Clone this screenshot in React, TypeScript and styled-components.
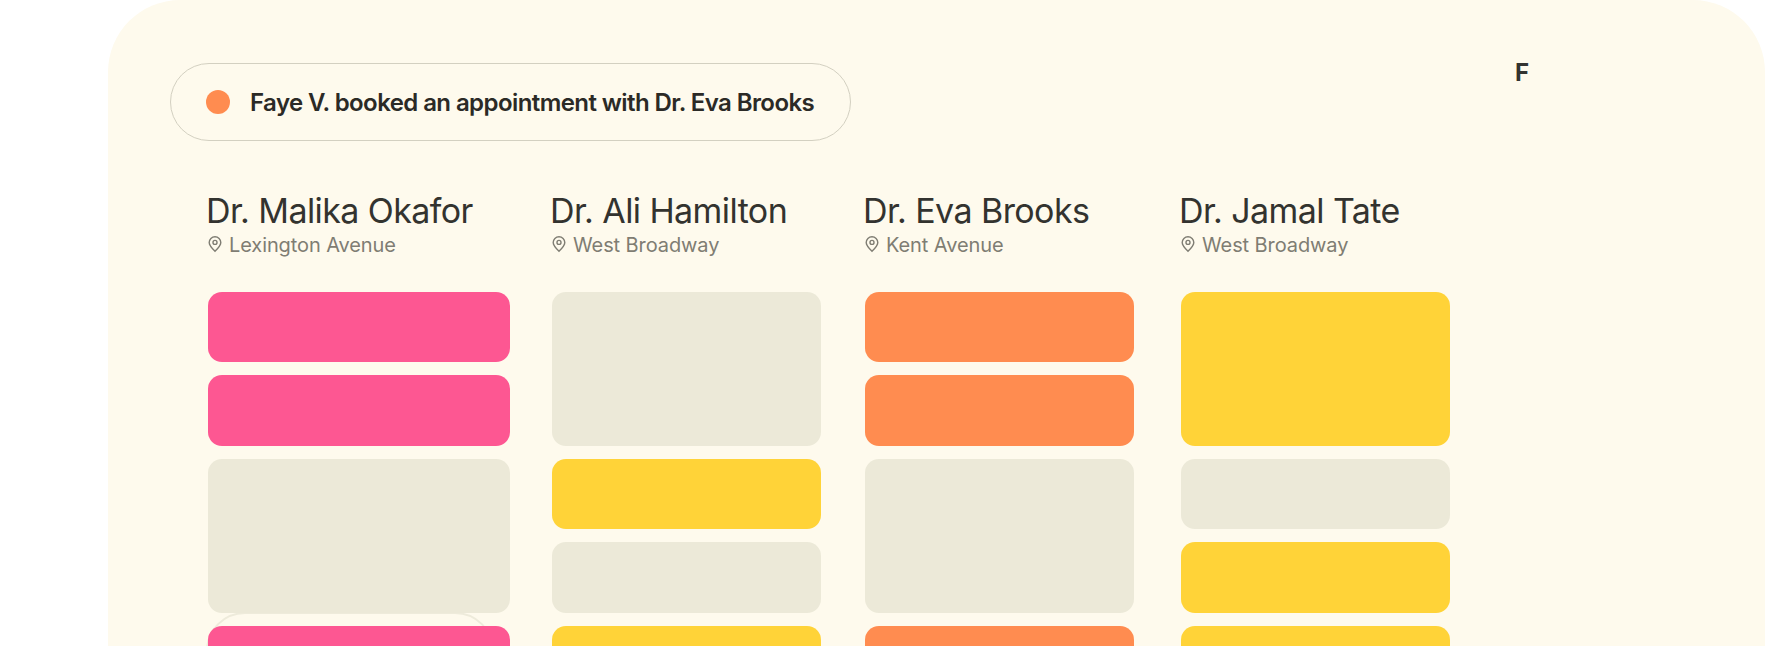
import styled, { createGlobalStyle } from "styled-components";

const GlobalStyle = createGlobalStyle`
  html, body {
    margin: 0;
    padding: 0;
    background: #fff;
  }
  body {
    font-family: Inter, "Liberation Sans", sans-serif;
    overflow: hidden;
  }
`;

const Page = styled.div`
  width: 1765px;
  height: 646px;
  padding-left: 108px;
  box-sizing: border-box;
  overflow: hidden;
`;

const Panel = styled.main`
  height: 760px;
  box-sizing: border-box;
  padding: 63px 0 0 62px;
  background: #fefaed;
  border-radius: 72px 72px 0 0;
`;

const TopRow = styled.div`
  display: flex;
  align-items: flex-start;
`;

const Notice = styled.div`
  display: flex;
  align-items: center;
  gap: 20px;
  width: 681px;
  height: 78px;
  box-sizing: border-box;
  padding-left: 35px;
  border: 1px solid #d3d0c1;
  border-radius: 39px;
  font-size: 24px;
  font-weight: 600;
  letter-spacing: -0.58px;
  color: #2b2a26;
  white-space: nowrap;
`;

const Dot = styled.span`
  width: 24px;
  height: 24px;
  border-radius: 50%;
  background: #ff8c50;
`;

const NextInitial = styled.span`
  margin: -3px 0 0 664px;
  font-size: 24px;
  line-height: 26px;
  font-weight: 700;
  color: #333330;
`;

const Columns = styled.div`
  display: flex;
  margin: 48px 0 0 38px;
`;

const Column = styled.section<{ $width: number; $gap: number }>`
  width: ${(p) => p.$width}px;
  margin-right: ${(p) => p.$gap}px;
  flex: none;
`;

const Header = styled.header`
  margin-left: -2px;
  height: 102.5px;
`;

const Name = styled.h2`
  margin: 0;
  font-size: 34px;
  line-height: 43px;
  font-weight: 400;
  letter-spacing: -0.58px;
  color: #33332f;
  white-space: nowrap;
`;

const Place = styled.div`
  display: flex;
  align-items: center;
  gap: 6px;
  font-size: 20px;
  line-height: 26px;
  letter-spacing: -0.1px;
  color: #7f7d73;
  white-space: nowrap;
`;

const PinIcon = styled.svg`
  width: 16px;
  height: 18px;
  margin: -3px 0 0 1px;
  fill: none;
  stroke: #7f7d73;
  stroke-width: 1.4;
`;

const Stack = styled.div`
  position: relative;
  display: flex;
  flex-direction: column;
  gap: 13px;
`;

const Slot = styled.div<{ $tone: string; $units: number }>`
  position: relative;
  z-index: 1;
  flex: none;
  height: ${(p) => p.$units * 70.5 + (p.$units - 1) * 13}px;
  border-radius: 14px;
  background: ${(p) => p.$tone};
`;

/* next notification peeking out from behind the grey slot */
const Ghost = styled.div`
  position: absolute;
  left: -2px;
  top: 320px;
  width: 288px;
  height: 78px;
  box-sizing: border-box;
  border: 2px solid #eeebdb;
  border-radius: 39px;
`;

const PINK = "#fd5792";
const ORANGE = "#ff8c50";
const YELLOW = "#ffd338";
const GREY = "#ece9d8";

type Doctor = {
  name: string;
  place: string;
  width: number;
  gap: number;
  slots: [string, number][];
};

const doctors: Doctor[] = [
  {
    name: "Dr. Malika Okafor",
    place: "Lexington Avenue",
    width: 302,
    gap: 42,
    slots: [[PINK, 1], [PINK, 1], [GREY, 2], [PINK, 1]],
  },
  {
    name: "Dr. Ali Hamilton",
    place: "West Broadway",
    width: 269,
    gap: 44,
    slots: [[GREY, 2], [YELLOW, 1], [GREY, 1], [YELLOW, 1]],
  },
  {
    name: "Dr. Eva Brooks",
    place: "Kent Avenue",
    width: 269,
    gap: 47,
    slots: [[ORANGE, 1], [ORANGE, 1], [GREY, 2], [ORANGE, 1]],
  },
  {
    name: "Dr. Jamal Tate",
    place: "West Broadway",
    width: 269,
    gap: 0,
    slots: [[YELLOW, 2], [GREY, 1], [YELLOW, 1], [YELLOW, 1]],
  },
];

const Pin = () => (
  <PinIcon viewBox="0 0 16 18">
    <path d="M8 16.300c3.200-3.100 5.800-5.700 5.800-8.800a5.800 5.800 0 0 0-11.600 0c0 3.100 2.600 5.700 5.800 8.800z" />
    <circle cx="8" cy="7.400" r="2" />
  </PinIcon>
);

export default function App() {
  return (
    <Page>
      <GlobalStyle />
      <Panel>
        <TopRow>
          <Notice>
            <Dot />
            Faye V. booked an appointment with Dr. Eva Brooks
          </Notice>
          <NextInitial>F</NextInitial>
        </TopRow>
        <Columns>
          {doctors.map((d, col) => (
            <Column key={d.name} $width={d.width} $gap={d.gap}>
              <Header>
                <Name>{d.name}</Name>
                <Place>
                  <Pin />
                  {d.place}
                </Place>
              </Header>
              <Stack>
                {col === 0 && <Ghost />}
                {d.slots.map(([tone, units], i) => (
                  <Slot key={i} $tone={tone} $units={units} />
                ))}
              </Stack>
            </Column>
          ))}
        </Columns>
      </Panel>
    </Page>
  );
}
